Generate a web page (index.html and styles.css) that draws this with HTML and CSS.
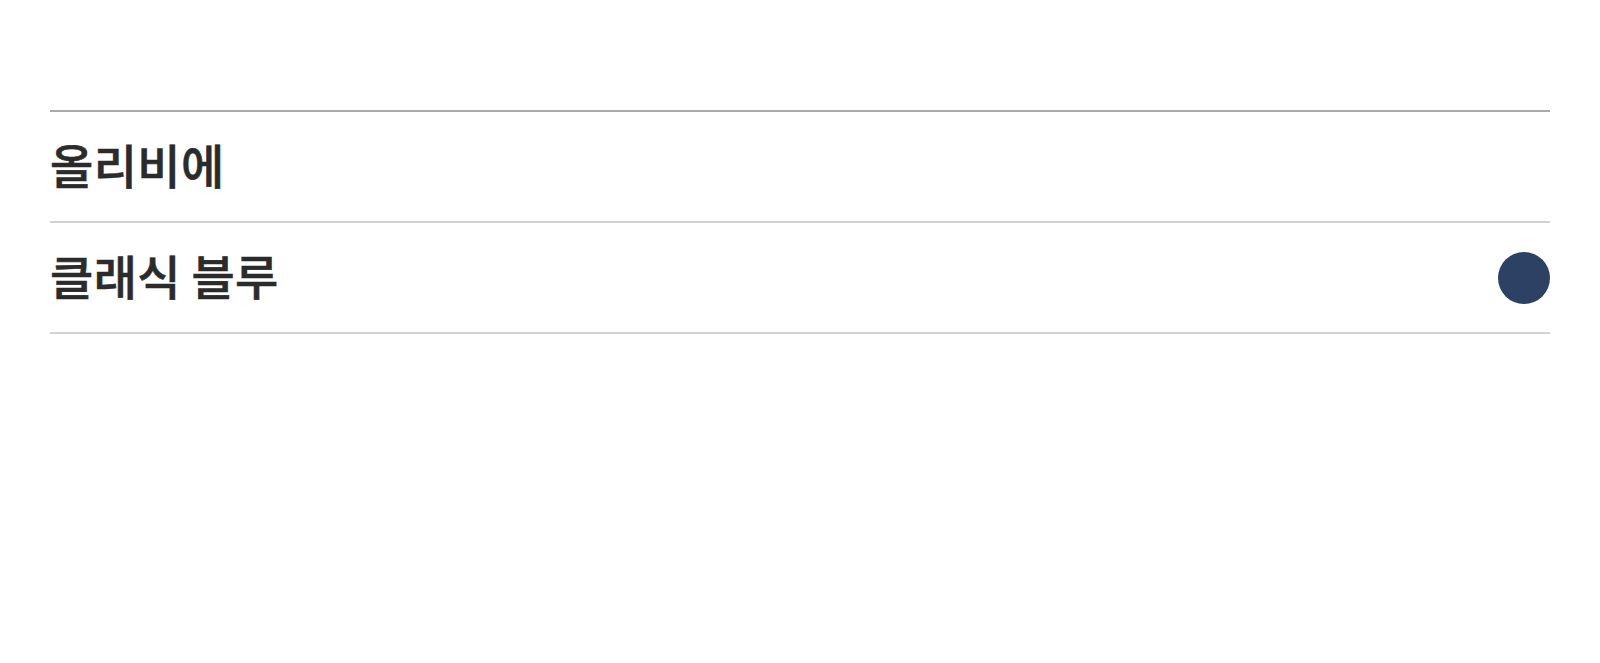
FILE: index.html
```html
<!DOCTYPE html>
<html lang="ko">
<head>
<meta charset="utf-8">
<link rel="stylesheet" href="styles.css">
</head>
<body>
<main class="page">
  <ul class="theme-list">
    <li class="theme-item"><span class="theme-name">올리비에</span></li>
    <li class="theme-item"><span class="theme-name">클래식 블루</span><span class="swatch"></span></li>
  </ul>
</main>
</body>
</html>
```
FILE: styles.css
```css
html, body {
  margin: 0;
  padding: 0;
  background: #ffffff;
}
.page {
  padding: 110px 50px 0;
}
.theme-list {
  list-style: none;
  margin: 0;
  padding: 0;
  border-top: 2px solid #aaaaaa;
}
.theme-item {
  display: flex;
  align-items: center;
  justify-content: space-between;
  height: 109px;
  border-bottom: 2px solid #d2d2d2;
  box-sizing: content-box;
}
.theme-name {
  font-family: "Noto Sans CJK KR", "Noto Sans", sans-serif;
  font-size: 47px;
  font-weight: 500;
  letter-spacing: 0.4px;
  word-spacing: -3px;
  line-height: 1.4;
  padding-bottom: 6px;
  color: #2b2b2b;
  -webkit-text-stroke: 0.6px #2b2b2b;
}
.swatch {
  width: 52px;
  height: 52px;
  border-radius: 50%;
  background: #2c4163;
}
```
